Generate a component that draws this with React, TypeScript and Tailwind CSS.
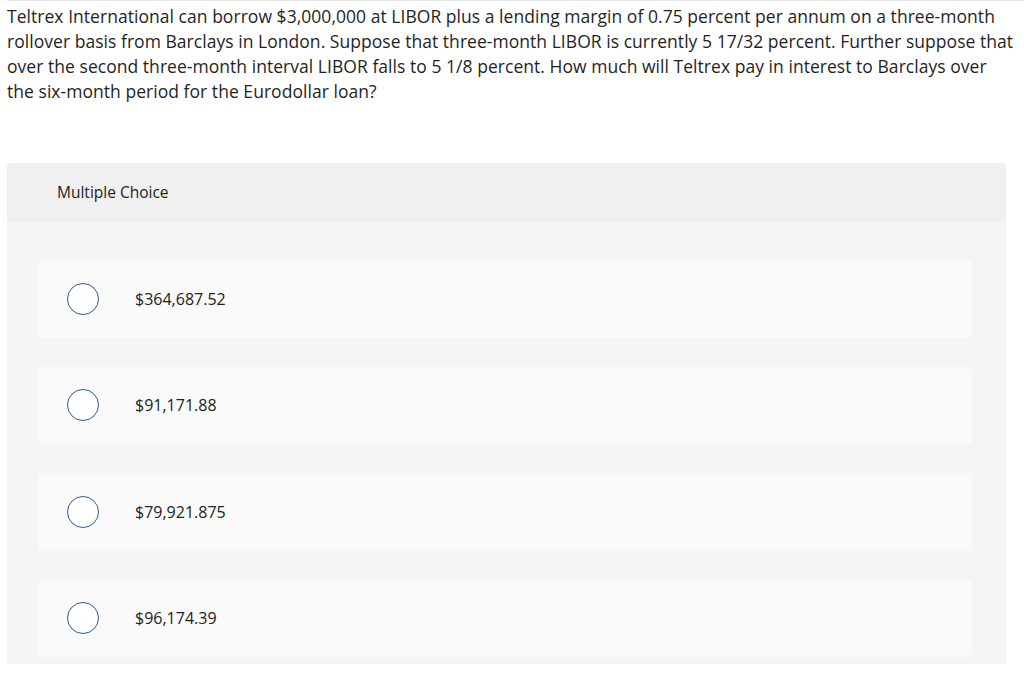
export default function App() {
  const options = ["$364,687.52", "$91,171.88", "$79,921.875", "$96,174.39"];
  const lines = [
    "Teltrex International can borrow $3,000,000 at LIBOR plus a lending margin of 0.75 percent per annum on a three-month",
    "rollover basis from Barclays in London. Suppose that three-month LIBOR is currently 5 17/32 percent. Further suppose that",
    "over the second three-month interval LIBOR falls to 5 1/8 percent. How much will Teltrex pay in interest to Barclays over",
    "the six-month period for the Eurodollar loan?",
  ];

  return (
    <div className="min-h-screen bg-white text-[#222]" style={{ fontFamily: "'Open Sans', 'Liberation Sans', sans-serif" }}>
      <div className="ml-[7px] border-t border-[#e6e6e6]" />
      <div className="px-[7px] pt-[3px] text-[17.5px] leading-[25px] tracking-[0.04px] text-[#1f1f1f]">
        {lines.map((l) => (
          <div key={l} className="whitespace-nowrap">{l}</div>
        ))}
      </div>

      <div className="mt-[59px] ml-[7px] w-[999px] rounded-t-[4px] bg-[#f5f5f5] pb-[6.5px]">
        <div className="flex h-[59px] items-center rounded-t-[4px] bg-[#f0f0f0] pl-[50px] text-[15.5px] text-[#222]">
          Multiple Choice
        </div>
        <div className="flex flex-col gap-[29px] pl-[31px] pr-[34px] pt-[38px]">
          {options.map((o) => (
            <div key={o} className="flex h-[77.5px] items-center rounded-[4px] bg-[#fafafa] pl-[29px]">
              <span className="h-[32px] w-[32px] shrink-0 rounded-full border border-[#2c5d94] bg-white" />
              <span className="ml-[36px] text-[16px] text-[#222]">{o}</span>
            </div>
          ))}
        </div>
      </div>
    </div>
  );
}
